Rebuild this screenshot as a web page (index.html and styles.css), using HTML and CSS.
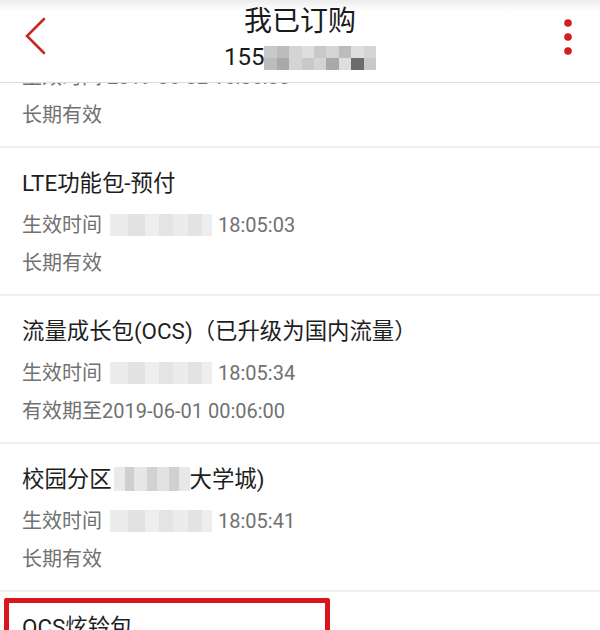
FILE: index.html
```html
<!DOCTYPE html>
<html lang="zh-CN">
<head>
<meta charset="utf-8">
<title>我已订购</title>
<link rel="stylesheet" href="styles.css">
</head>
<body>
<div class="screen">
  <header class="appbar">
    <div class="back">
      <svg width="24" height="40" viewBox="0 0 24 40"><polyline points="20,2 3,19 20,36" fill="none" stroke="#c42a22" stroke-width="2.6" stroke-linecap="round" stroke-linejoin="miter"/></svg>
    </div>
    <div class="titles">
      <div class="title">我已订购</div>
      <div class="subtitle">155<span class="mosaic-head">
        <i class="c3"></i><i class="c2"></i><i class="c4"></i><i class="c5"></i><i class="c3"></i><i class="c4"></i><i class="c2"></i><i class="c5"></i><i class="c4"></i>
        <i class="c2"></i><i class="c1"></i><i class="c4"></i><i class="c3"></i><i class="c4"></i><i class="c1"></i><i class="c5"></i><i class="c0"></i><i class="c3"></i>
      </span></div>
    </div>
    <div class="more">
      <svg width="80" height="82" viewBox="0 0 80 82"><circle cx="48" cy="23" r="3.8" fill="#d1201c"/><circle cx="48" cy="37" r="3.8" fill="#d1201c"/><circle cx="48" cy="51" r="3.8" fill="#d1201c"/></svg>
    </div>
  </header>

  <main class="list">
    <section class="item first">
      <div class="name">4G套餐</div>
      <div class="meta">生效时间 2019-06-02 16:06:00</div>
      <div class="meta">长期有效</div>
    </section>
    <section class="item">
      <div class="name">LTE功能包-预付</div>
      <div class="meta">生效时间<span class="blur w102"></span>18:05:03</div>
      <div class="meta">长期有效</div>
    </section>
    <section class="item">
      <div class="name">流量成长包(OCS)（已升级为国内流量）</div>
      <div class="meta">生效时间<span class="blur w102"></span>18:05:34</div>
      <div class="meta">有效期至2019-06-01 00:06:00</div>
    </section>
    <section class="item">
      <div class="name">校园分区<span class="blur-title"></span>大学城)</div>
      <div class="meta">生效时间<span class="blur w102"></span>18:05:41</div>
      <div class="meta">长期有效</div>
    </section>
    <section class="item last">
      <div class="name">OCS炫铃包</div>
      <div class="highlight"></div>
    </section>
  </main>
</div>
</body>
</html>
```

FILE: styles.css
```css
html, body {
  margin: 0;
  padding: 0;
  background: #fff;
}
body {
  font-family: Roboto, "Noto Sans CJK SC", "Noto Sans", sans-serif;
  color: #222;
}
.screen {
  width: 600px;
  height: 630px;
  overflow: hidden;
  display: flex;
  flex-direction: column;
}
.appbar {
  position: relative;
  z-index: 2;
  height: 82px;
  flex: none;
  display: flex;
  background: linear-gradient(#ececec 0, #f8f8f8 6px, #fff 12px);
  border-bottom: 1px solid #dcdcdc;
}
.back {
  width: 80px;
  padding: 17px 0 0 24px;
  box-sizing: border-box;
}
.back svg { display: block; }
.titles {
  flex: 1;
  text-align: center;
  padding-top: 5px;
}
.title {
  font-size: 28px;
  line-height: 34px;
  color: #1a1a1a;
}
.subtitle {
  font-size: 24px;
  line-height: 36px;
  color: #1a1a1a;
  display: flex;
  justify-content: center;
  align-items: center;
}
.mosaic-head {
  display: grid;
  grid-template-columns: repeat(9, 12.4px);
  grid-template-rows: 12px 12px;
  margin-top: 1px;
}
.mosaic-head i { display: block; }
.c0 { background: #6c6c6c; }
.c1 { background: #a9a9a9; }
.c2 { background: #bcbcbc; }
.c3 { background: #c9c9c9; }
.c4 { background: #d4d4d4; }
.c5 { background: #dedede; }
.more { width: 80px; }
.more svg { display: block; }

.list {
  flex: 1;
  overflow: hidden;
}
.item {
  padding: 18px 0 12px 22px;
  border-bottom: 2px solid #eeeeee;
  position: relative;
}
.item.first { margin-top: -83px; }
.name {
  font-size: 22.4px;
  line-height: 34px;
  color: #1e1e1e;
  display: flex;
  align-items: center;
}
.meta {
  font-size: 20px;
  line-height: 38px;
  color: #717171;
  display: flex;
  align-items: center;
}
.item .name + .meta { margin-top: 6px; }
.blur {
  display: inline-block;
  height: 22px;
  margin: 0 6px 0 8px;
  background:
    linear-gradient(90deg, #ececec 0 18%, #e2e2e2 18% 34%, #eeeeee 34% 48%, #e4e4e4 48% 62%, #ececec 62% 76%, #e3e3e3 76% 90%, #ededed 90% 100%);
}
.w102 { width: 102px; }
.blur-title {
  display: inline-block;
  width: 76px;
  height: 24px;
  margin-left: 2px;
  background:
    linear-gradient(90deg, #eaeaea 0 14%, #cfcfcf 14% 26%, #e6e6e6 26% 44%, #d2d2d2 44% 56%, #e2e2e2 56% 72%, #d0d0d0 72% 86%, #e8e8e8 86% 100%);
}
.highlight {
  position: absolute;
  left: 4px;
  top: 6px;
  width: 316px;
  height: 120px;
  border: 5px solid #d8161b;
  border-radius: 2px;
}
```
